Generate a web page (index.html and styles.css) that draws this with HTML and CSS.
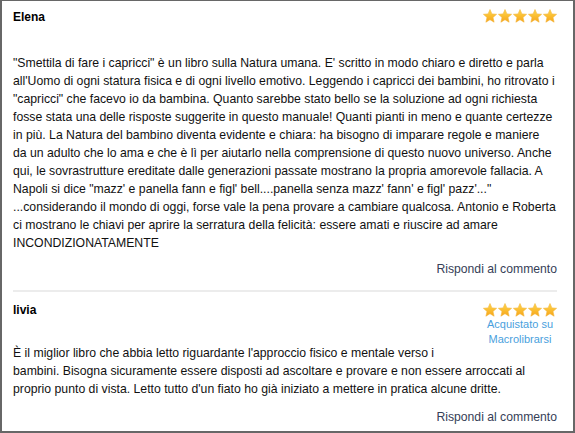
FILE: index.html
```html
<!DOCTYPE html>
<html lang="it">
<head>
<meta charset="utf-8">
<link rel="stylesheet" href="styles.css">
</head>
<body>
<svg width="0" height="0" class="defs">
  <defs>
    <linearGradient id="gold" x1="0" y1="0" x2="0" y2="1">
      <stop offset="0" stop-color="#ffd84a"/>
      <stop offset="1" stop-color="#f6a41a"/>
    </linearGradient>
    <symbol id="star" viewBox="0 0 14 14">
      <polygon points="7,0.5 8.9,4.9 13.6,5.3 10,8.4 11.1,13.2 7,10.7 2.9,13.2 4,8.4 0.4,5.3 5.1,4.9" fill="url(#gold)" stroke="#f3b63a" stroke-width="0.6" stroke-linejoin="round"/>
    </symbol>
  </defs>
</svg>
<div class="frame">
  <div class="review">
    <div class="head">
      <span class="name">Elena</span>
      <span class="stars">
        <svg><use href="#star"/></svg><svg><use href="#star"/></svg><svg><use href="#star"/></svg><svg><use href="#star"/></svg><svg><use href="#star"/></svg>
      </span>
    </div>
    <p class="text">"Smettila di fare i capricci" è un libro sulla Natura umana. E' scritto in modo chiaro e diretto e parla<br>all'Uomo di ogni statura fisica e di ogni livello emotivo. Leggendo i capricci dei bambini, ho ritrovato i<br>"capricci" che facevo io da bambina. Quanto sarebbe stato bello se la soluzione ad ogni richiesta<br>fosse stata una delle risposte suggerite in questo manuale! Quanti pianti in meno e quante certezze<br>in più. La Natura del bambino diventa evidente e chiara: ha bisogno di imparare regole e maniere<br>da un adulto che lo ama e che è lì per aiutarlo nella comprensione di questo nuovo universo. Anche<br>qui, le sovrastrutture ereditate dalle generazioni passate mostrano la propria amorevole fallacia. A<br>Napoli si dice "mazz' e panella fann e figl' bell....panella senza mazz' fann' e figl' pazz'..."<br>...considerando il mondo di oggi, forse vale la pena provare a cambiare qualcosa. Antonio e Roberta<br>ci mostrano le chiavi per aprire la serratura della felicità: essere amati e riuscire ad amare<br>INCONDIZIONATAMENTE</p>
    <div class="reply"><a href="#">Rispondi al commento</a></div>
  </div>
  <div class="review second">
    <div class="side">
      <span class="stars">
        <svg><use href="#star"/></svg><svg><use href="#star"/></svg><svg><use href="#star"/></svg><svg><use href="#star"/></svg><svg><use href="#star"/></svg>
      </span>
      <span class="bought">Acquistato su<br>Macrolibrarsi</span>
    </div>
    <div class="name name2">livia</div>
    <p class="text text2">È il miglior libro che abbia letto riguardante l'approccio fisico e mentale verso i<br>bambini. Bisogna sicuramente essere disposti ad ascoltare e provare e non essere arroccati al<br>proprio punto di vista. Letto tutto d'un fiato ho già iniziato a mettere in pratica alcune dritte.</p>
    <div class="reply reply2"><a href="#">Rispondi al commento</a></div>
  </div>
</div>
</body>
</html>
```

FILE: styles.css
```css
html, body {
  margin: 0;
  padding: 0;
  background: #fff;
}
.defs {
  position: absolute;
  width: 0;
  height: 0;
}
.frame {
  height: 430px;
  border-style: solid;
  border-color: #676767;
  border-width: 1px 2px 2px 2px;
  font-family: "Liberation Sans", Arial, sans-serif;
  font-size: 12px;
  color: #111;
  overflow: hidden;
}
.review {
  margin: 0 16px 0 11px;
}
.head {
  display: flex;
  justify-content: space-between;
  align-items: flex-start;
  padding-top: 7px;
}
.name {
  font-weight: bold;
  line-height: 19px;
  color: #000;
}
.stars {
  display: flex;
  gap: 1px;
  margin-top: 1px;
}
.stars svg {
  width: 14px;
  height: 14px;
  display: block;
}
.text {
  margin: 27px -10px 0 0;
  line-height: 18px;
  font-size: 12.25px;
  white-space: nowrap;
}
.reply {
  text-align: right;
  line-height: 18px;
  margin-top: 8px;
  padding-bottom: 12px;
  border-bottom: 2px solid #ececec;
}
.reply a {
  color: #364057;
  text-decoration: none;
  font-size: 12.2px;
}
.second {
  padding-top: 7px;
}
.side {
  float: right;
  display: flex;
  flex-direction: column;
  align-items: center;
  width: 74px;
  margin-top: 3px;
}
.bought {
  color: #4a9fdd;
  font-size: 11px;
  line-height: 15px;
  text-align: center;
  margin-top: 0;
  white-space: nowrap;
}
.name2 {
  height: 43px;
  padding-top: 2px;
}
.text2 {
  margin: 0;
}
.reply2 {
  margin-top: 10px;
  border-bottom: none;
}
```
